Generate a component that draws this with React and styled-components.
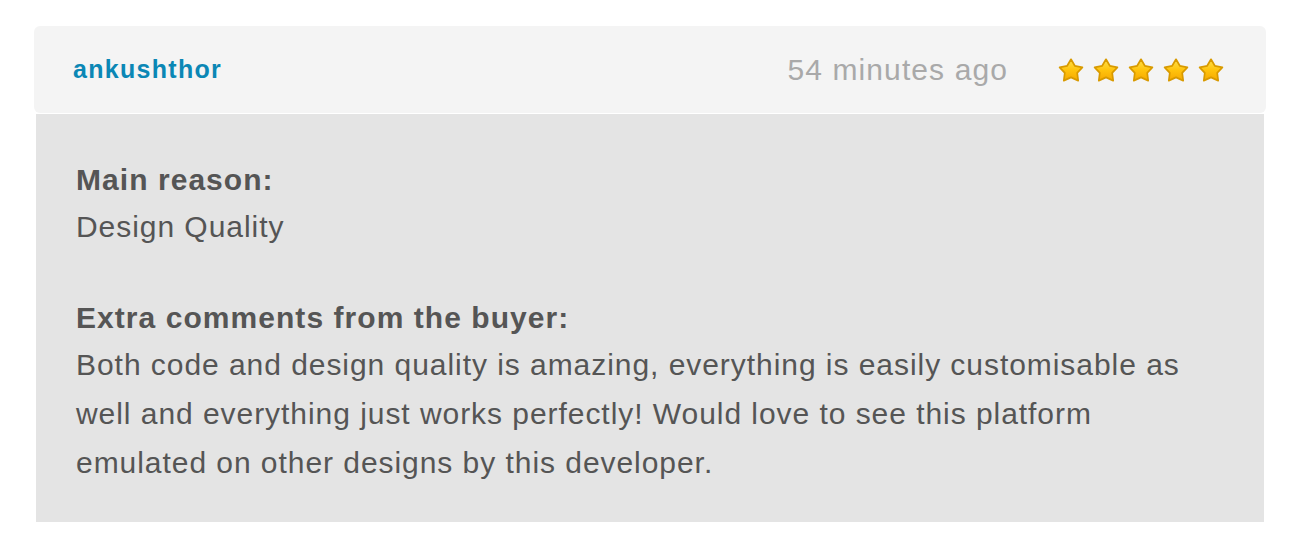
import React from "react";
import styled, { createGlobalStyle } from "styled-components";

const Global = createGlobalStyle`
  html, body { margin: 0; padding: 0; background: #ffffff; }
  body { font-family: "Liberation Sans", Arial, Helvetica, sans-serif; }
`;

const Page = styled.div`
  padding: 26px 32px 20px 34px;
`;

const Review = styled.article`
  display: flex;
  flex-direction: column;
`;

const Header = styled.header`
  height: 87px;
  display: flex;
  align-items: center;
  padding: 0 42px 0 39px;
  background: #f4f4f4;
  border-radius: 6px;
`;

const User = styled.a`
  font-size: 25px;
  font-weight: 700;
  letter-spacing: 1.3px;
  color: #0b87b5;
  text-decoration: none;
  margin-right: auto;
`;

const Time = styled.span`
  font-size: 30px;
  letter-spacing: 1.1px;
  color: #a9a9a9;
  margin-right: 50px;
`;

const Stars = styled.div`
  display: flex;
  gap: 9px;
`;

const Body = styled.section`
  margin: 1px 2px 0;
  background: #e4e4e4;
  padding: 43px 60px 35px 40px;
  color: #555555;
  font-size: 30px;
  letter-spacing: 0.95px;
`;

const Block = styled.div`
  & + & {
    margin-top: 44px;
  }
`;

const Label = styled.div`
  font-weight: 700;
  letter-spacing: 1.05px;
  line-height: 45px;
`;

const Text = styled.p`
  margin: 0;
  line-height: 49px;
`;

const Star = () => (
  <svg width="26" height="24" viewBox="0 0 26 24">
    <defs>
      <linearGradient id="sg" x1="0" y1="0" x2="0" y2="1">
        <stop offset="0" stopColor="#ffe14d" />
        <stop offset="0.5" stopColor="#ffc40d" />
        <stop offset="1" stopColor="#f7a900" />
      </linearGradient>
    </defs>
    <path
      d="M13 1.3 L16.8 7.8 L24.4 9.3 L19.2 14.9 L20.2 22.6 L13 19.4 L5.8 22.6 L6.8 14.9 L1.6 9.3 L9.2 7.8 Z"
      fill="url(#sg)"
      stroke="#d89a00"
      strokeWidth="1.7"
      strokeLinejoin="round"
    />
  </svg>
);

export default function App() {
  return (
    <Page>
      <Global />
      <Review>
        <Header>
          <User href="#">ankushthor</User>
          <Time>54 minutes ago</Time>
          <Stars>
            {[0, 1, 2, 3, 4].map((i) => (
              <Star key={i} />
            ))}
          </Stars>
        </Header>
        <Body>
          <Block>
            <Label>Main reason:</Label>
            <Text>Design Quality</Text>
          </Block>
          <Block>
            <Label>Extra comments from the buyer:</Label>
            <Text>
              Both code and design quality is amazing, everything is easily
              customisable as well and everything just works perfectly! Would
              love to see this platform emulated on other designs by this
              developer.
            </Text>
          </Block>
        </Body>
      </Review>
    </Page>
  );
}
